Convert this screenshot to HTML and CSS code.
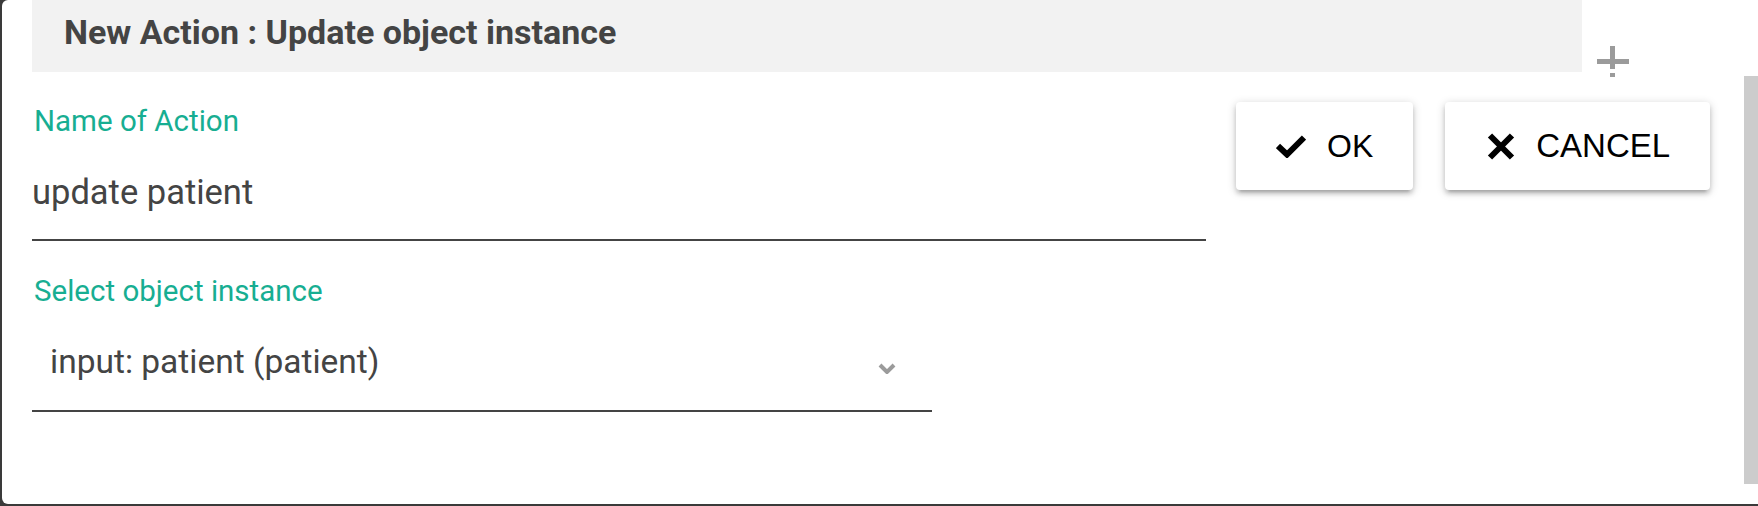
FILE: index.html
```html
<!DOCTYPE html>
<html lang="en">
<head>
    <meta charset="UTF-8">
    <meta name="viewport" content="width=device-width, initial-scale=1.0">
    <title>New Action</title>
    <link rel="stylesheet" href="styles.css">
</head>
<body>
    <div class="dialog">
        <div class="dialog-main">
            <div class="header-row">
                <div class="header-bar">
                    <h1>New Action : Update object instance</h1>
                </div>
                <svg class="add-icon" width="32" height="31" viewBox="0 0 32 31">
                    <rect x="0" y="13" width="32" height="5" fill="#9b9b9b"/>
                    <rect x="13" y="0" width="5" height="23" fill="#9b9b9b"/>
                    <rect x="13" y="27" width="5" height="4" fill="#9b9b9b"/>
                </svg>
            </div>

            <div class="body-row">
                <div class="form">
                    <div class="field">
                        <label for="actionName">Name of Action</label>
                        <input id="actionName" class="text-input" type="text" value="update patient">
                    </div>

                    <div class="field select-field">
                        <label>Select object instance</label>
                        <div class="select-box">
                            <span>input: patient (patient)</span>
                            <svg class="chevron" width="18" height="11" viewBox="0 0 18 11">
                                <path d="M2 2 L9 9 L16 2" fill="none" stroke="#9b9b9b" stroke-width="4"/>
                            </svg>
                        </div>
                    </div>
                </div>

                <div class="actions">
                    <button class="btn btn-ok">
                        <svg width="30" height="23" viewBox="0 0 30 23">
                            <path d="M2 11 L11 19.5 L28 2.5" fill="none" stroke="#000" stroke-width="6"/>
                        </svg>
                        OK
                    </button>
                    <button class="btn btn-cancel">
                        <svg width="28" height="27" viewBox="0 0 28 27">
                            <path d="M3 2.5 L25 24.5 M25 2.5 L3 24.5" fill="none" stroke="#000" stroke-width="6"/>
                        </svg>
                        CANCEL
                    </button>
                </div>
            </div>
        </div>

        <div class="scrollbar">
            <div class="scroll-thumb"></div>
        </div>
    </div>
</body>
</html>
```

FILE: styles.css
```css
* {
    margin: 0;
    padding: 0;
    box-sizing: border-box;
}

body {
    background-color: #3a3a3a;
    height: 506px;
    overflow: hidden;
    font-family: Roboto, "Noto Sans", sans-serif;
}

.dialog {
    margin-left: 2px;
    height: 504px;
    background: #fff;
    border-radius: 6px 0 0 6px;
    display: flex;
}

.dialog-main {
    flex: 1;
    padding-left: 30px;
}

/* header */

.header-row {
    display: flex;
    align-items: flex-start;
    height: 72px;
}

.header-bar {
    width: 1550px;
    height: 72px;
    background: #f2f2f2;
    padding-left: 32px;
}

h1 {
    font-size: 34px;
    font-weight: 700;
    line-height: 64px;
    color: #444;
}

.add-icon {
    flex-shrink: 0;
    margin-left: 15px;
    margin-top: 46px;
}

/* body */

.body-row {
    display: flex;
}

.form {
    width: 1174px;
}

.field {
    margin-top: 33px;
}

.select-field {
    margin-top: 34px;
    width: 900px;
}

label {
    display: block;
    padding-left: 2px;
    font-size: 29.5px;
    line-height: 32px;
    color: #17ae92;
}

.text-input {
    display: block;
    width: 100%;
    border: none;
    border-bottom: 2px solid #444;
    padding: 35px 0 27px;
    font-family: inherit;
    font-size: 34.5px;
    line-height: 40px;
    height: 104px;
    color: #444;
    outline: none;
    background: transparent;
}

.select-box {
    display: flex;
    justify-content: space-between;
    align-items: center;
    padding: 35px 36px 28px 18px;
    border-bottom: 2px solid #444;
    font-size: 33.5px;
    line-height: 40px;
    color: #444;
}

.chevron {
    margin-top: 12px;
}

/* buttons */

.actions {
    display: flex;
    gap: 32px;
    margin-left: 30px;
    margin-top: 30px;
    align-items: flex-start;
}

.btn {
    display: flex;
    align-items: center;
    gap: 21px;
    height: 88px;
    padding: 0 40px;
    background: #fff;
    border: none;
    border-radius: 4px;
    font-family: "Liberation Sans", Arial, sans-serif;
    font-size: 32px;
    color: #000;
    cursor: pointer;
    box-shadow: 0 4px 4px 0 rgba(0, 0, 0, 0.14),
                0 6px 2px -4px rgba(0, 0, 0, 0.12),
                0 2px 10px 0 rgba(0, 0, 0, 0.2);
}

.btn-cancel {
    padding-left: 42px;
    font-size: 33px;
}

/* scrollbar */

.scrollbar {
    width: 14px;
    padding: 76px 0 20px;
}

.scroll-thumb {
    height: 100%;
    background: #cccccc;
}
```
